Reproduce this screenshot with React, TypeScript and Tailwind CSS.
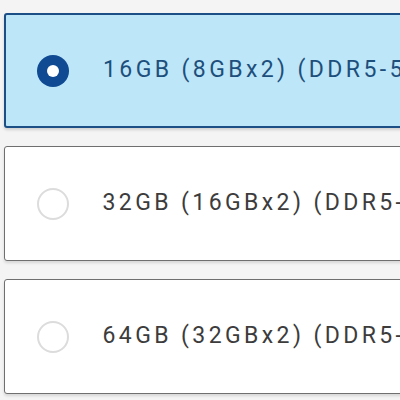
import React from "react";

const items = [
  { label: "16GB (8GBx2) (DDR5-5600)", selected: true },
  { label: "32GB (16GBx2) (DDR5-5600)", selected: false },
  { label: "64GB (32GBx2) (DDR5-5600)", selected: false },
];

export default function App() {
  return (
    <div className="w-[400px] h-[400px] overflow-hidden bg-[#f4f4f4]" style={{ fontFamily: "Roboto, 'Noto Sans', sans-serif" }}>
      <div className="flex flex-col gap-[18px] pt-[13px] pl-[4px]">
        {items.map((it) => (
          <div
            key={it.label}
            className={
              it.selected
                ? "w-[560px] h-[115px] shrink-0 flex items-center rounded-[3px] border-2 border-[#1c4f86] bg-[#bde6f8] shadow-[0_2px_3px_rgba(0,0,0,0.15)]"
                : "w-[560px] h-[115px] shrink-0 flex items-center rounded-[3px] border-[1.5px] border-[#6f6f6f] bg-white shadow-[0_2px_3px_rgba(0,0,0,0.12)]"
            }
          >
            <div className={it.selected ? "ml-[31px] w-[32px] h-[32px] rounded-full bg-[#0f4a92] flex items-center justify-center shrink-0" : "ml-[31.5px] w-[32px] h-[32px] rounded-full border-2 border-[#dcdcdc] bg-white shrink-0"}>
              {it.selected && <div className="w-[12px] h-[12px] rounded-full bg-white" />}
            </div>
            <span
              className={
                it.selected
                  ? "ml-[34px] text-[23px] tracking-[3.4px] text-[#1d4f7c] whitespace-nowrap"
                  : "ml-[34px] text-[23px] tracking-[3.4px] text-[#3c3c3c] whitespace-nowrap"
              }
            >
              {it.label}
            </span>
          </div>
        ))}
      </div>
    </div>
  );
}
